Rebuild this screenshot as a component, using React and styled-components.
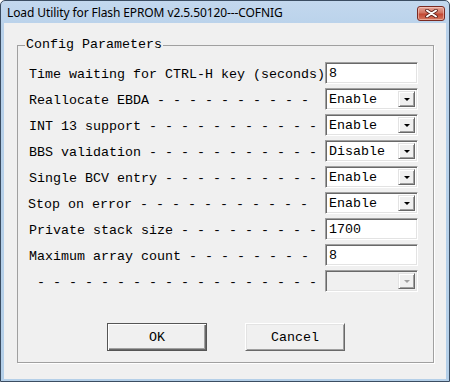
import React from "react";
import styled, { createGlobalStyle } from "styled-components";

const rows = [
  { label: "Time waiting for CTRL-H key (seconds)", type: "text", value: "8" },
  { label: "Reallocate EBDA" + " -".repeat(10), type: "combo", value: "Enable" },
  { label: "INT 13 support" + " -".repeat(11), type: "combo", value: "Enable" },
  { label: "BBS validation" + " -".repeat(11), type: "combo", value: "Disable" },
  { label: "Single BCV entry" + " -".repeat(10), type: "combo", value: "Enable" },
  { label: "Stop on error" + " -".repeat(11), type: "combo", value: "Enable", nudge: true },
  { label: "Private stack size" + " -".repeat(9), type: "text", value: "1700" },
  { label: "Maximum array count" + " -".repeat(8), type: "text", value: "8" },
  { label: " -".repeat(18), type: "combo", value: "", disabled: true },
];

const App = () => {
  return (
    <>
      <GlobalStyle />
      <Window>
        <TitleBar>
          <Title>Load Utility for Flash EPROM v2.5.50120---COFNIG</Title>
          <CloseButton>
            <svg width="13" height="9" viewBox="0 0 13 9">
              <path
                d="M2 1.5 L11 7.5 M11 1.5 L2 7.5"
                stroke="#5a1f1a"
                strokeWidth="3.6"
                strokeLinecap="round"
              />
              <path
                d="M2 1.5 L11 7.5 M11 1.5 L2 7.5"
                stroke="#ffffff"
                strokeWidth="2"
                strokeLinecap="round"
              />
            </svg>
          </CloseButton>
        </TitleBar>
        <Client>
          <Group>
            <Legend>Config Parameters</Legend>
            {rows.map((row, i) => (
              <Row key={i} $nudge={row.nudge}>
                <Label>{row.label}</Label>
                {row.type === "text" ? (
                  <Field>{row.value}</Field>
                ) : (
                  <Field $disabled={row.disabled}>
                    <ComboText>{row.value}</ComboText>
                    <DropButton>
                      <Arrow $disabled={row.disabled} />
                    </DropButton>
                  </Field>
                )}
              </Row>
            ))}
            <ButtonRow>
              <Button $default>OK</Button>
              <Button>Cancel</Button>
            </ButtonRow>
          </Group>
        </Client>
      </Window>
    </>
  );
};

export default App;

const GlobalStyle = createGlobalStyle`
  html, body {
    margin: 0;
    padding: 0;
    background: #ffffff;
  }
  * {
    box-sizing: border-box;
  }
`;

const Window = styled.div`
  width: 450px;
  height: 382px;
  border: 1px solid #3b4d62;
  border-radius: 5px 5px 0 0;
  background: linear-gradient(#c3d8ee, #b8d1ea 30px, #b4cfe8);
  display: flex;
  flex-direction: column;
  padding: 0 3px 2px 3px;
`;

const TitleBar = styled.div`
  height: 22px;
  display: flex;
  align-items: center;
  justify-content: space-between;
  padding: 0 1px 0 3px;
`;

const Title = styled.span`
  font-family: "Noto Sans", "Open Sans", sans-serif;
  font-size: 12px;
  color: #000000;
  letter-spacing: -0.1px;
`;

const CloseButton = styled.div`
  width: 28px;
  height: 15px;
  margin-top: 3px;
  border: 1px solid #7a2a22;
  border-radius: 3px;
  background: linear-gradient(#e6a79b, #d1725f 45%, #c24733 55%, #d77a62);
  box-shadow: inset 0 0 0 1px rgba(255, 220, 210, 0.5);
  display: flex;
  align-items: center;
  justify-content: center;
`;

const Client = styled.div`
  flex: 1;
  background: #f0f0f0;
  display: flex;
  flex-direction: column;
`;

const Group = styled.fieldset`
  margin: 14px 12px 15px 13px;
  padding: 9px 15px 11px 7px;
  border: 1px solid #a0a0a0;
  box-shadow: 1px 1px 0 #ffffff;
  min-width: 0;
  display: flex;
  flex-direction: column;
  gap: 4px;
  font-family: "Liberation Mono", "Courier New", monospace;
  font-size: 13.33px;
  color: #000000;
`;

const Legend = styled.legend`
  padding: 0 1px;
  line-height: 16px;
  white-space: pre;
`;

const Row = styled.div`
  height: 22px;
  display: flex;
  align-items: center;
  justify-content: space-between;
  padding-left: ${({ $nudge }) => ($nudge ? "3px" : "4px")};
`;

const Label = styled.span`
  white-space: pre;
  line-height: 16px;
  padding-top: 3px;
`;

const Field = styled.div`
  width: 93px;
  height: 22px;
  border: 1px solid;
  border-color: #a0a0a0 #ffffff #ffffff #a0a0a0;
  box-shadow: inset 1px 1px 0 #696969, inset -1px -1px 0 #e3e3e3;
  background: ${({ $disabled }) => ($disabled ? "#f0f0f0" : "#ffffff")};
  display: flex;
  align-items: center;
  padding: 2px 2px 2px 3px;
  white-space: pre;
`;

const ComboText = styled.span`
  flex: 1;
`;

const DropButton = styled.div`
  width: 17px;
  height: 100%;
  border: 1px solid;
  border-color: #e3e3e3 #696969 #696969 #e3e3e3;
  box-shadow: inset 1px 1px 0 #ffffff, inset -1px -1px 0 #a0a0a0;
  background: #f0f0f0;
  display: flex;
  align-items: center;
  justify-content: center;
`;

const Arrow = styled.span`
  width: 0;
  height: 0;
  border-left: 3px solid transparent;
  border-right: 3px solid transparent;
  border-top: 3px solid ${({ $disabled }) => ($disabled ? "#a0a0a0" : "#000000")};
  margin-top: 1px;
`;

const ButtonRow = styled.div`
  display: flex;
  gap: 38px;
  margin-top: 27px;
  padding-left: 82px;
`;

const Button = styled.button`
  width: 100px;
  height: 28px;
  padding: 0;
  font-family: "Liberation Mono", "Courier New", monospace;
  font-size: 13.33px;
  color: #000000;
  background: #f0f0f0;
  border: 1px solid;
  border-color: ${({ $default }) =>
    $default ? "#555555" : "#ffffff #696969 #696969 #ffffff"};
  box-shadow: ${({ $default }) =>
    $default
      ? "inset 1px 1px 0 #ffffff, inset -1px -1px 0 #696969, inset -2px -2px 0 #a0a0a0"
      : "inset 1px 1px 0 #e3e3e3, inset -1px -1px 0 #a0a0a0"};
`;
